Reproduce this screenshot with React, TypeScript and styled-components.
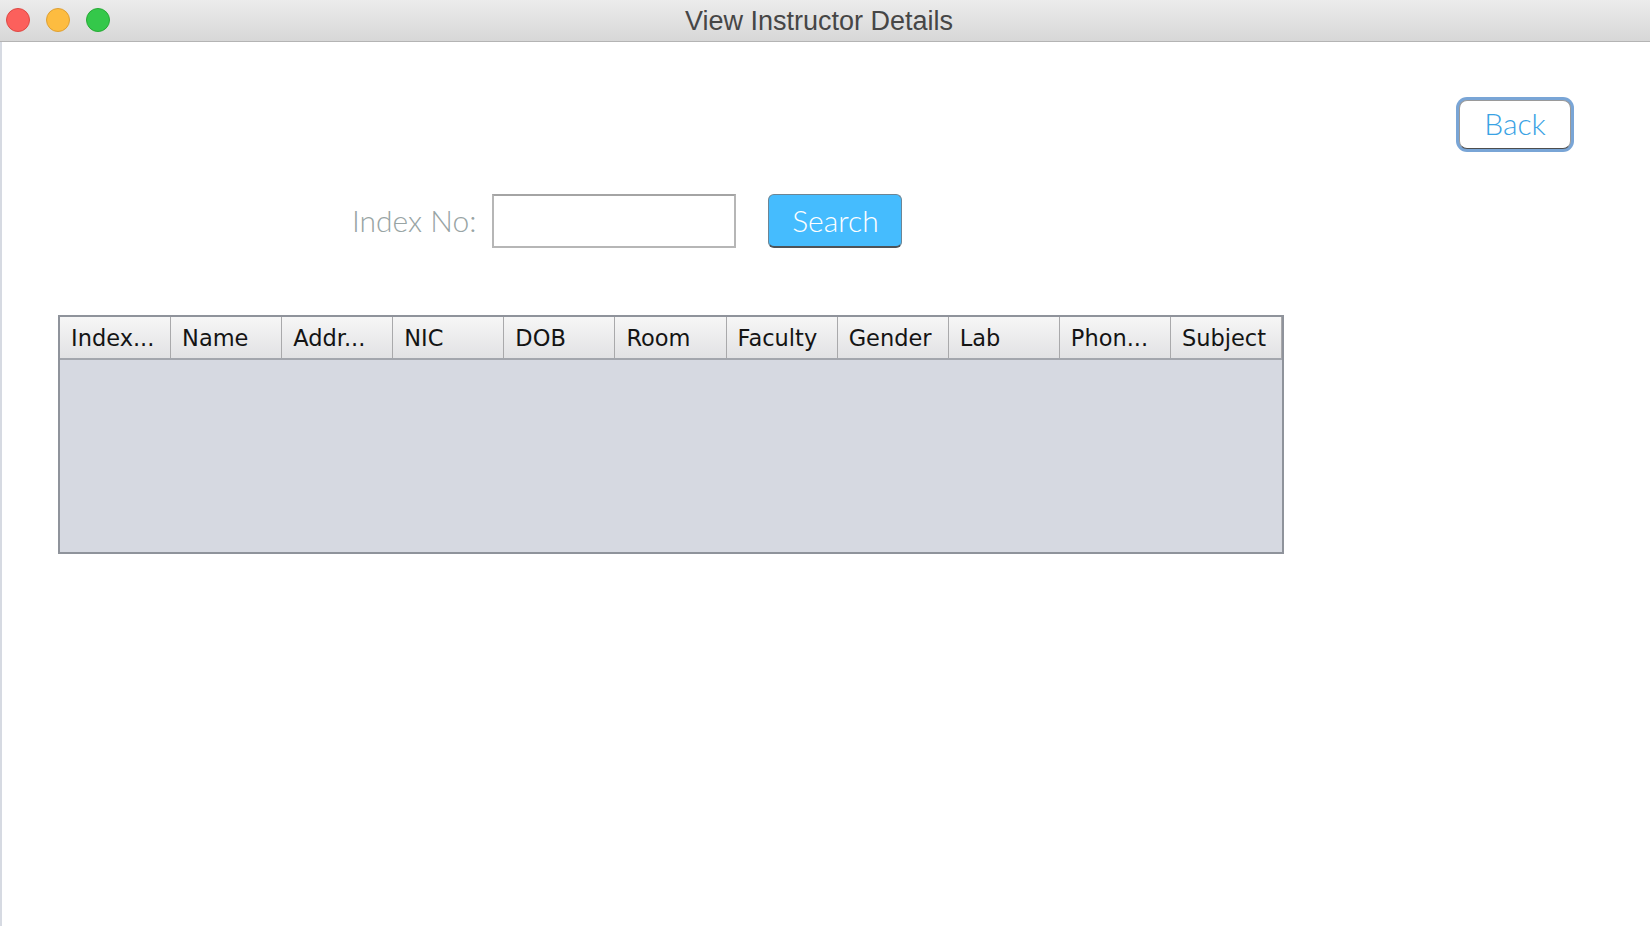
import React from "react";
import styled, { createGlobalStyle } from "styled-components";

const Global = createGlobalStyle`
  html, body { margin: 0; padding: 0; background: #ffffff; }
  body { width: 1650px; height: 926px; overflow: hidden; }
  * { box-sizing: border-box; }
`;

const Window = styled.div`
  width: 1650px;
  height: 926px;
  display: flex;
  flex-direction: column;
  background: #ffffff;
`;

const TitleBar = styled.div`
  height: 42px;
  flex: none;
  display: grid;
  grid-template-columns: 1fr auto 1fr;
  align-items: center;
  padding: 0 18px 0 6px;
  background: linear-gradient(#ececec, #d7d7d7);
  border-bottom: 1px solid #b4b4b4;
`;

const Lights = styled.div`
  display: flex;
  gap: 16px;
  align-items: center;
  margin-top: -2px;
`;

const Light = styled.span<{ $fill: string; $edge: string }>`
  width: 24px;
  height: 24px;
  border-radius: 50%;
  background: ${(p) => p.$fill};
  border: 1px solid ${(p) => p.$edge};
`;

const Title = styled.div`
  font-family: "Liberation Sans", Arial, sans-serif;
  font-size: 27px;
  color: #464646;
  margin-top: 1px;
`;

const Content = styled.div`
  flex: 1;
  display: flex;
  flex-direction: column;
  border-left: 2px solid #d6dae2;
`;

const TopRow = styled.div`
  display: flex;
  justify-content: flex-end;
  padding: 58px 79px 0 0;
`;

const BackButton = styled.button`
  width: 112px;
  height: 49px;
  border-radius: 8px;
  background: #ffffff;
  border: 1px solid #9a9a9a;
  border-bottom-color: #4e4e4e;
  box-shadow: 0 0 0 3px #79a5d6;
  font-family: Lato, "Open Sans", sans-serif;
  font-weight: 300;
  font-size: 30px;
  color: #39a2e4;
  padding: 0 0 3px;
`;

const SearchRow = styled.div`
  display: flex;
  align-items: center;
  margin-top: 45px;
  padding-left: 350px;
`;

const Label = styled.span`
  font-family: Lato, "Open Sans", sans-serif;
  font-weight: 300;
  font-size: 30px;
  color: #98a4a4;
  margin: 0 16px 3px 0;
`;

const Input = styled.input`
  width: 244px;
  height: 54px;
  border: 2px solid #b6b6b6;
  border-top-color: #a4a4a4;
  background: #ffffff;
  margin-right: 32px;
  outline: none;
`;

const SearchButton = styled.button`
  width: 134px;
  height: 54px;
  border-radius: 6px;
  background: #45bcfe;
  border: 1px solid #6d8594;
  border-bottom: 2px solid #4d5358;
  font-family: Lato, "Open Sans", sans-serif;
  font-weight: 300;
  font-size: 30px;
  color: #ffffff;
  padding: 0 0 2px;
`;

const Table = styled.div`
  margin: 67px 0 0 56px;
  width: 1226px;
  height: 239px;
  border: 2px solid #8f939b;
  background: #d6d9e1;
  display: flex;
  flex-direction: column;
`;

const HeaderRow = styled.div`
  height: 43px;
  display: grid;
  grid-template-columns: repeat(11, 1fr);
  background: linear-gradient(#f6f6f6, #e2e2e4);
  border-bottom: 2px solid #a3a6ad;
`;

const HeaderCell = styled.div`
  display: flex;
  align-items: center;
  padding-left: 11px;
  border-right: 1px solid #a9a9ab;
  font-family: "DejaVu Sans", Verdana, sans-serif;
  font-size: 22.5px;
  color: #141414;
  white-space: nowrap;
  overflow: hidden;
`;

const columns = [
  "Index...",
  "Name",
  "Addr...",
  "NIC",
  "DOB",
  "Room",
  "Faculty",
  "Gender",
  "Lab",
  "Phon...",
  "Subject",
];

export default function App() {
  return (
    <>
      <Global />
      <Window>
        <TitleBar>
          <Lights>
            <Light $fill="#fc605c" $edge="#de4944" />
            <Light $fill="#fdbc40" $edge="#dea034" />
            <Light $fill="#34c84a" $edge="#27aa35" />
          </Lights>
          <Title>View Instructor Details</Title>
          <span />
        </TitleBar>
        <Content>
          <TopRow>
            <BackButton>Back</BackButton>
          </TopRow>
          <SearchRow>
            <Label>Index No:</Label>
            <Input />
            <SearchButton>Search</SearchButton>
          </SearchRow>
          <Table>
            <HeaderRow>
              {columns.map((c) => (
                <HeaderCell key={c}>{c}</HeaderCell>
              ))}
            </HeaderRow>
          </Table>
        </Content>
      </Window>
    </>
  );
}
